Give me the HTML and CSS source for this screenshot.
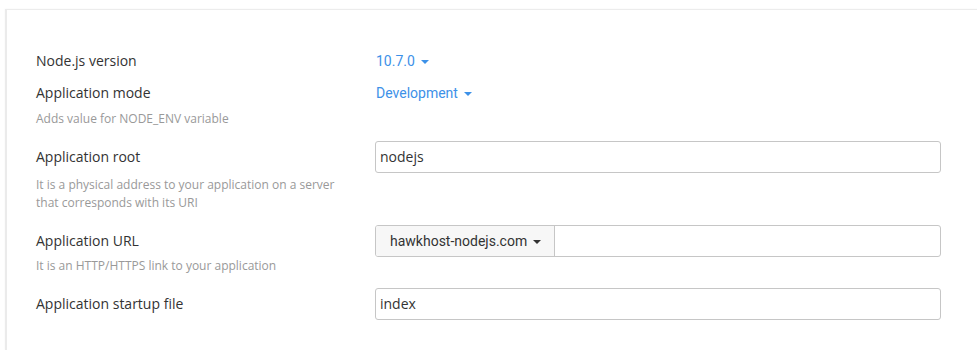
FILE: index.html
```html
<!DOCTYPE html>
<html>
<head>
<meta charset="utf-8">
<link rel="stylesheet" href="styles.css">
</head>
<body>
<div class="panel">
  <div class="form">
    <div class="row">
      <div class="label-col"><div class="label">Node.js version</div></div>
      <div class="control"><a class="dd-link">10.7.0<span class="caret"></span></a></div>
    </div>
    <div class="row">
      <div class="label-col">
        <div class="label">Application mode</div>
        <div class="hint hint-tight">Adds value for NODE_ENV variable</div>
      </div>
      <div class="control"><a class="dd-link">Development<span class="caret"></span></a></div>
    </div>
    <div class="row spaced">
      <div class="label-col">
        <div class="label">Application root</div>
        <div class="hint hint-root">It is a physical address to your application on a server that corresponds with its URI</div>
      </div>
      <div class="control"><div class="input">nodejs</div></div>
    </div>
    <div class="row spaced">
      <div class="label-col">
        <div class="label">Application URL</div>
        <div class="hint hint-url">It is an HTTP/HTTPS link to your application</div>
      </div>
      <div class="control">
        <div class="input-group">
          <div class="addon">hawkhost-nodejs.com<span class="caret dark"></span></div>
          <div class="group-field"></div>
        </div>
      </div>
    </div>
    <div class="row spaced">
      <div class="label-col"><div class="label">Application startup file</div></div>
      <div class="control"><div class="input">index</div></div>
    </div>
  </div>
</div>
</body>
</html>
```
FILE: styles.css
```css
html, body {
  margin: 0;
  padding: 0;
  background: #ffffff;
}
body {
  font-family: "Open Sans", "Liberation Sans", sans-serif;
  color: #333333;
  overflow: hidden;
}
.panel {
  margin: 9px 0 0 5px;
  width: 1000px;
  height: 341px;
  border-top: 1px solid #ececec;
  border-left: 2px solid #ebebeb;
  box-shadow: 0 0 2px rgba(0, 0, 0, 0.04);
  padding: 35px 0 0 29px;
  box-sizing: border-box;
}
.form {
  width: 905px;
}
.row {
  display: grid;
  grid-template-columns: 339px 1fr;
}
.row.spaced {
  margin-top: 13px;
}
.label {
  font-size: 14px;
  line-height: 32px;
  color: #333;
}
.hint {
  font-size: 12px;
  line-height: 18px;
  color: #999999;
  width: 300px;
}
.hint-tight { margin-top: 1px; }
.hint-root { margin-top: 3px; }
.hint-url { margin-top: 0; }
.control {
  display: flex;
  align-items: flex-start;
}
.dd-link {
  font-family: Roboto, "Liberation Sans", sans-serif;
  font-size: 14px;
  line-height: 32px;
  color: #3d91e8;
  padding-left: 1px;
  display: inline-flex;
  align-items: center;
}
.caret {
  display: inline-block;
  width: 0;
  height: 0;
  border-left: 4px solid transparent;
  border-right: 4px solid transparent;
  border-top: 4px solid #3d91e8;
  margin-left: 6px;
  margin-top: 1px;
}
.caret.dark {
  border-top-color: #333;
  margin-left: 6px;
}
.input {
  box-sizing: border-box;
  width: 100%;
  height: 32px;
  border: 1px solid #c6c6c6;
  border-radius: 3px;
  font-size: 14px;
  line-height: 30px;
  padding-left: 4px;
  color: #333;
}
.input-group {
  display: flex;
  width: 100%;
  height: 32px;
  box-sizing: border-box;
  border: 1px solid #c6c6c6;
  border-radius: 3px;
}
.addon {
  font-family: Roboto, "Liberation Sans", sans-serif;
  font-size: 14px;
  line-height: 30px;
  background: #f7f7f7;
  border-right: 1px solid #c6c6c6;
  border-radius: 2px 0 0 2px;
  padding: 0 12px 0 14px;
  width: 179px;
  box-sizing: border-box;
  display: flex;
  align-items: center;
  color: #333;
}
.group-field {
  flex: 1;
}
```
